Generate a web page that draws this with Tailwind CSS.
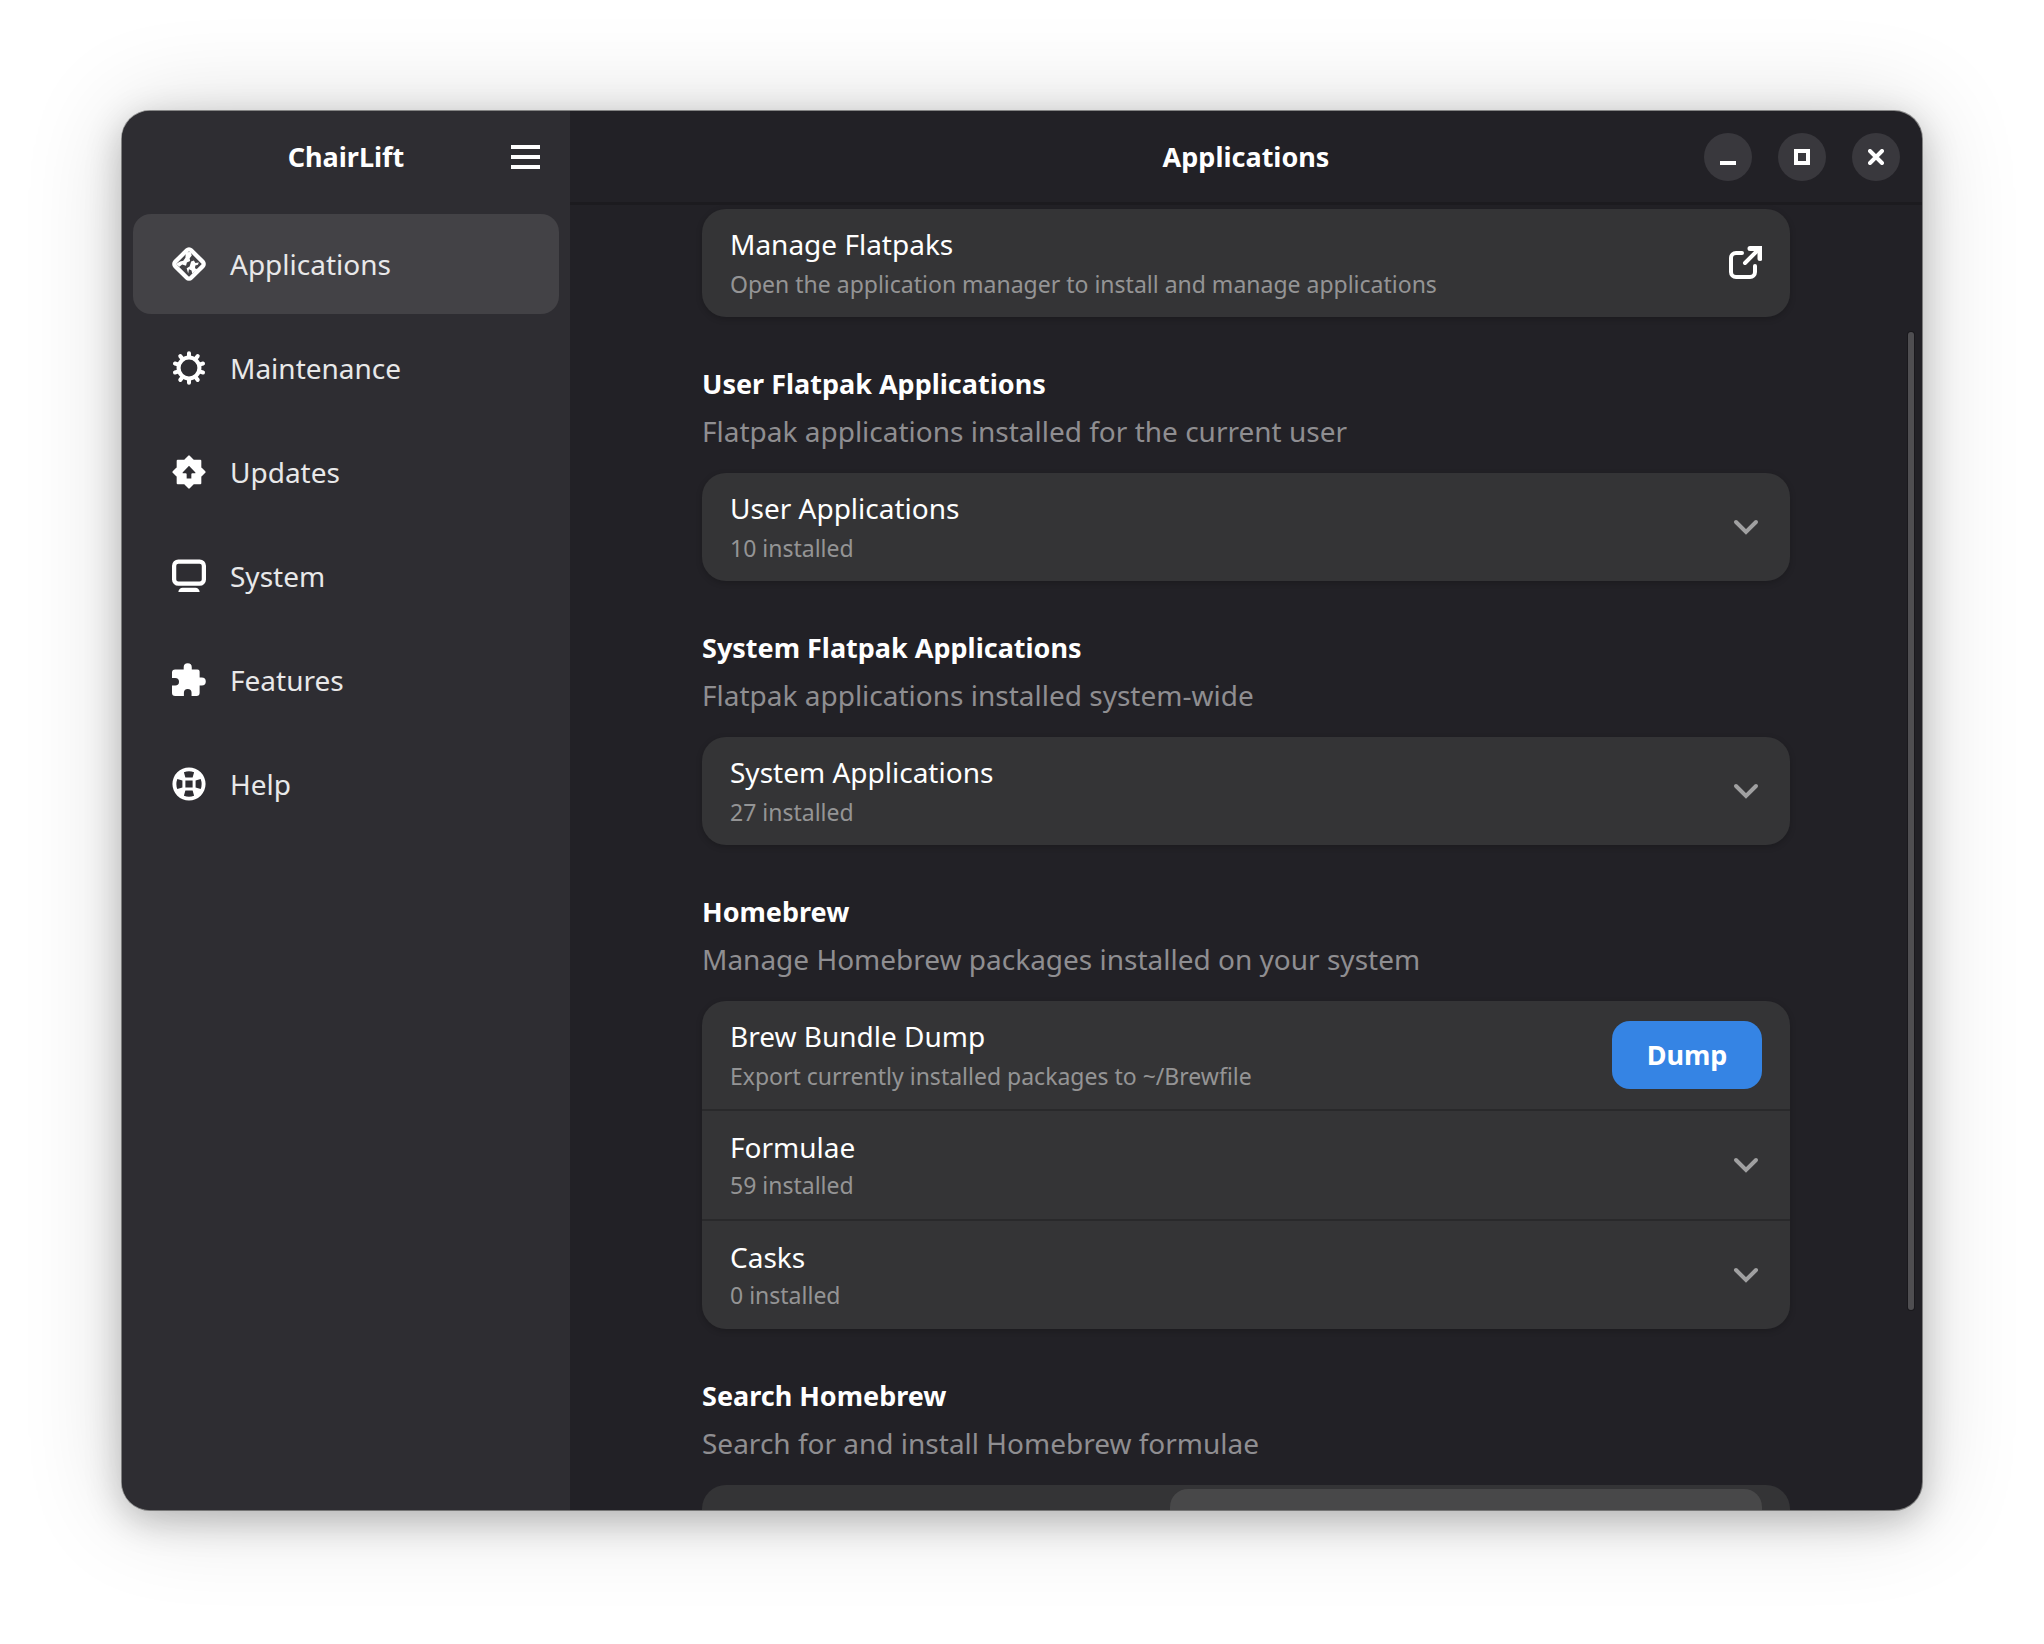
<!DOCTYPE html>
<html lang="en">
  <head>
    <meta charset="UTF-8" />
    <meta name="viewport" content="width=device-width, initial-scale=1.0" />
    <title>ChairLift</title>
    <script src="https://cdn.jsdelivr.net/npm/@tailwindcss/browser@4"></script>
  </head>
  <body class="h-screen bg-white px-[122px] pt-[111px] pb-[134px] font-['Noto_Sans',sans-serif] text-[28px] leading-9 text-white">
    <div class="relative flex h-full overflow-hidden rounded-[28px] bg-[#222126] shadow-[0_0_0_1px_rgba(0,0,0,0.4),0_10px_36px_rgba(0,0,0,0.24),0_2px_100px_rgba(0,0,0,0.16)]">

      <!-- Sidebar -->
      <aside class="flex w-[448px] shrink-0 flex-col bg-[#2e2d32]">
        <header class="grid h-[91px] grid-cols-[1fr_auto_1fr] items-center px-[27px]">
          <h1 class="col-start-2 text-[27px] font-bold">ChairLift</h1>
          <button type="button" aria-label="Main menu" class="justify-self-end">
            <svg class="h-[34px] w-[34px]" viewBox="0 0 34 34" fill="#fff"><path d="M2 5h29v4H2zM2 15h29v4H2zM2 25h29v4H2z" /></svg>
          </button>
        </header>

        <nav class="flex flex-col gap-1 px-[11px] py-3 text-[#e8e8e9]">
          <a href="#applications" class="flex h-[100px] items-center gap-6 rounded-[18px] bg-[#434246] px-[39px]">
            <svg class="h-[34px] w-[34px]" viewBox="0 0 16 16" fill="#fff">
              <path fill="none" stroke="#fff" stroke-width="2" stroke-linejoin="round" d="M9 1.500l5.500 5.500a1.400 1.400 0 0 1 0 2l-5.500 5.500a1.400 1.400 0 0 1-2 0L1.500 9a1.400 1.400 0 0 1 0-2l5.500-5.500a1.400 1.400 0 0 1 2 0z" />
              <path d="M6.500 2.500L8.800 2.300 9.300 4 8.300 5.300 8.500 6.600 7 7.300 6.600 8.800 4.800 8.200 3.500 9.300 1.800 8 3.800 6.800 5.300 6.500 6.300 5zM9 6.800L10.300 6.400 11 7.500 12.600 7.300 12.200 8.300 11 8.700 10.800 10 12 10.500 9.500 12.500 9.200 11 8 10.500 7.600 12.500 6.900 10 8.300 9.200z" />
            </svg>
            Applications
          </a>
          <a href="#maintenance" class="flex h-[100px] items-center gap-6 rounded-[18px] px-[39px]">
            <svg class="h-[34px] w-[34px]" viewBox="-8 -8 16 16" fill="none" stroke="#fff">
              <circle r="4.900" stroke-width="1.900" />
              <path stroke-width="1.900" stroke-linecap="round" d="M0-5.500V-6.900M3.200-4.500L4.100-5.600M5.200-1.700L6.600-2.100M5.200 1.700L6.600 2.100M3.200 4.500L4.100 5.600M0 5.500V6.900M-3.200 4.500L-4.100 5.600M-5.200 1.700L-6.600 2.100M-5.200-1.700L-6.600-2.100M-3.200-4.500L-4.100-5.600" />
            </svg>
            Maintenance
          </a>
          <a href="#updates" class="flex h-[100px] items-center gap-6 rounded-[18px] px-[39px]">
            <svg class="h-[34px] w-[34px]" viewBox="-8 -8 16 16" fill="#fff">
              <path fill-rule="evenodd" stroke="#fff" stroke-width="1" stroke-linejoin="round" d="M0-7.300L2-5.300H5.300V-2L7.300 0 5.300 2V5.300H2L0 7.300-2 5.300H-5.300V2L-7.300 0-5.300-2V-5.300H-2zM0-3.600L-3.500 0V1.100H-1.600V3.600H1.600V1.100H3.500V0z" />
            </svg>
            Updates
          </a>
          <a href="#system" class="flex h-[100px] items-center gap-6 rounded-[18px] px-[39px]">
            <svg class="h-[34px] w-[34px]" viewBox="0 0 16 16" fill="#fff">
              <rect x="1" y="1.200" width="14" height="10.400" rx="2" fill="none" stroke="#fff" stroke-width="2" />
              <path d="M5 13.500h6a2 2 0 0 1 2 2H3a2 2 0 0 1 2-2z" />
            </svg>
            System
          </a>
          <a href="#features" class="flex h-[100px] items-center gap-6 rounded-[18px] px-[39px]">
            <svg class="h-[34px] w-[34px]" viewBox="0 0 16 16" fill="#fff">
              <path d="M5.500 3V2a1.900 1.900 0 0 1 3.800 0v1H12a1 1 0 0 1 1 1v2.800h1a1.900 1.900 0 0 1 0 3.800h-1V14a1.500 1.500 0 0 1-1.500 1.500H9.200V14a1.800 1.800 0 0 0-3.600 0v1.500H1.500A1.500 1.500 0 0 1 0 14v-3.400h1.500a1.800 1.800 0 0 0 0-3.600H0V4.500A1.500 1.500 0 0 1 1.500 3z" />
            </svg>
            Features
          </a>
          <a href="#help" class="flex h-[100px] items-center gap-6 rounded-[18px] px-[39px]">
            <svg class="h-[34px] w-[34px]" viewBox="-8 -8 16 16" fill="#fff">
              <path fill-rule="evenodd" d="M0-7.800A7.800 7.800 0 0 1 0 7.800 7.800 7.800 0 0 1 0-7.800zM-2.400-5.500L-1.700-3.100H1.700L2.400-5.500Q0-6.400-2.400-5.500zM-2.400 5.500L-1.700 3.100H1.700L2.400 5.500Q0 6.400-2.400 5.500zM-5.500-2.400L-3.100-1.700V1.700L-5.500 2.400Q-6.400 0-5.500-2.400zM5.500-2.400L3.100-1.700V1.700L5.500 2.400Q6.400 0 5.500-2.400zM-1.700-1.700V1.700H1.700V-1.700z" />
            </svg>
            Help
          </a>
        </nav>
      </aside>

      <!-- Content -->
      <section class="flex min-w-0 flex-1 flex-col">
        <header class="grid h-[91px] shrink-0 grid-cols-[1fr_auto_1fr] items-center px-[22px]">
          <h2 class="col-start-2 text-[27px] font-bold">Applications</h2>
          <div class="flex gap-[26px] justify-self-end">
            <button type="button" aria-label="Minimize" class="flex size-12 items-center justify-center rounded-full bg-[#39383d]">
              <svg class="size-4" viewBox="0 0 16 16" fill="#fff"><path d="M0 12h16v4H0z" /></svg>
            </button>
            <button type="button" aria-label="Maximize" class="flex size-12 items-center justify-center rounded-full bg-[#39383d]">
              <svg class="size-4" viewBox="0 0 16 16" fill="none" stroke="#fff" stroke-width="4"><path d="M2 2h12v12H2z" /></svg>
            </button>
            <button type="button" aria-label="Close" class="flex size-12 items-center justify-center rounded-full bg-[#39383d]">
              <svg class="size-4" viewBox="0 0 16 16" stroke="#fff" stroke-width="4" stroke-linecap="round"><path d="M2 2l12 12M14 2L2 14" /></svg>
            </button>
          </div>
        </header>

        <main class="relative min-h-0 flex-1 overflow-hidden border-t-3 border-[#1c1b1f] px-8 pt-1">
          <div class="mx-auto flex max-w-[1088px] flex-col gap-[49px]">

            <a href="#flatpaks" class="flex h-[108px] items-center justify-between rounded-[24px] bg-[#343436] px-7 shadow-[0_2px_6px_rgba(0,0,0,0.2)]">
              <span class="flex flex-col gap-1 pt-[2px]">
                <span>Manage Flatpaks</span>
                <span class="text-[23px] text-[#949495]">Open the application manager to install and manage applications</span>
              </span>
              <svg class="h-[34px] w-[34px]" viewBox="0 0 34 34" fill="none" stroke="#fff" stroke-width="4" stroke-linecap="round" stroke-linejoin="round">
                <path d="M14 7H8a5 5 0 0 0-5 5V26a5 5 0 0 0 5 5h14a5 5 0 0 0 5-5V20M17 17L30 4" />
                <path d="M22 2.500H32V12.500" stroke-linejoin="miter" stroke-width="5" />
              </svg>
            </a>

            <section>
              <h3 class="text-[27px] font-bold">User Flatpak Applications</h3>
              <p class="mt-[11px] text-[#8f8e91]">Flatpak applications installed for the current user</p>
              <button type="button" class="mt-6 flex h-[108px] w-full items-center justify-between rounded-[24px] bg-[#343436] px-7 text-left shadow-[0_2px_6px_rgba(0,0,0,0.2)]">
                <span class="flex flex-col gap-1 pt-[2px]">
                  <span>User Applications</span>
                  <span class="text-[23px] text-[#949495]">10 installed</span>
                </span>
                <svg class="size-8" viewBox="0 0 32 32" fill="none" stroke="#a0a0a1" stroke-width="4" stroke-linecap="round"><path d="M6 11l10 10 10-10" /></svg>
              </button>
            </section>

            <section>
              <h3 class="text-[27px] font-bold">System Flatpak Applications</h3>
              <p class="mt-[11px] text-[#8f8e91]">Flatpak applications installed system-wide</p>
              <button type="button" class="mt-6 flex h-[108px] w-full items-center justify-between rounded-[24px] bg-[#343436] px-7 text-left shadow-[0_2px_6px_rgba(0,0,0,0.2)]">
                <span class="flex flex-col gap-1 pt-[2px]">
                  <span>System Applications</span>
                  <span class="text-[23px] text-[#949495]">27 installed</span>
                </span>
                <svg class="size-8" viewBox="0 0 32 32" fill="none" stroke="#a0a0a1" stroke-width="4" stroke-linecap="round"><path d="M6 11l10 10 10-10" /></svg>
              </button>
            </section>

            <section>
              <h3 class="text-[27px] font-bold">Homebrew</h3>
              <p class="mt-[11px] text-[#8f8e91]">Manage Homebrew packages installed on your system</p>
              <div class="mt-6 divide-y-2 divide-[#29292b] rounded-[24px] bg-[#343436] shadow-[0_2px_6px_rgba(0,0,0,0.2)]">
                <div class="flex h-[110px] items-center justify-between px-7">
                  <div class="flex flex-col gap-1 pt-[2px]">
                    <span>Brew Bundle Dump</span>
                    <span class="text-[23px] text-[#949495]">Export currently installed packages to ~/Brewfile</span>
                  </div>
                  <button type="button" class="h-[68px] w-[150px] rounded-[18px] bg-[#3584e4] text-[27px] font-bold">Dump</button>
                </div>
                <button type="button" class="flex h-[110px] w-full items-center justify-between px-7 text-left">
                  <span class="flex flex-col gap-[2px] pt-[2px]">
                    <span>Formulae</span>
                    <span class="text-[23px] text-[#949495]">59 installed</span>
                  </span>
                  <svg class="size-8" viewBox="0 0 32 32" fill="none" stroke="#a0a0a1" stroke-width="4" stroke-linecap="round"><path d="M6 11l10 10 10-10" /></svg>
                </button>
                <button type="button" class="flex h-[108px] w-full items-center justify-between px-7 text-left">
                  <span class="flex flex-col gap-[2px] pt-[2px]">
                    <span>Casks</span>
                    <span class="text-[23px] text-[#949495]">0 installed</span>
                  </span>
                  <svg class="size-8" viewBox="0 0 32 32" fill="none" stroke="#a0a0a1" stroke-width="4" stroke-linecap="round"><path d="M6 11l10 10 10-10" /></svg>
                </button>
              </div>
            </section>

            <section>
              <h3 class="text-[27px] font-bold">Search Homebrew</h3>
              <p class="mt-[11px] text-[#8f8e91]">Search for and install Homebrew formulae</p>
              <div class="mt-6 flex h-[108px] justify-end rounded-[24px] bg-[#343436] px-7 pt-1">
                <input type="search" aria-label="Search Homebrew" class="h-[68px] w-[592px] rounded-[18px] bg-[#484849] px-6" />
              </div>
            </section>
          </div>

          <!-- Scrollbar thumb -->
          <div class="absolute top-[127px] right-2 h-[978px] w-[6px] rounded-full bg-[#4f4e51] ring-1 ring-[#1a191d]"></div>
        </main>
      </section>
    </div>
  </body>
</html>
